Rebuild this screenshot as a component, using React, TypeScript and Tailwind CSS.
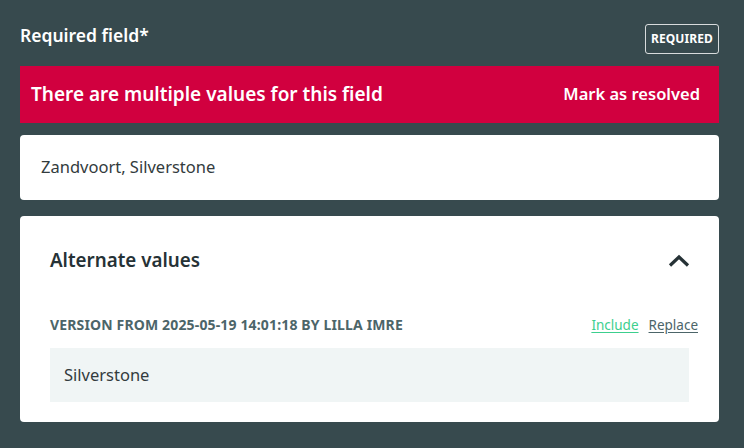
import React from "react";

const font = { fontFamily: '"Noto Sans", "Open Sans", sans-serif' };

export default function App() {
  return (
    <div className="w-[744px] h-[448px] bg-[#374a4e] pl-5 pr-[25px] pt-5" style={font}>
      {/* Header row */}
      <div className="flex items-start justify-between h-[46px]">
        <h2 className="mt-[1px] text-[17.5px] font-semibold text-white leading-[28px]">Required field*</h2>
        <span className="mt-1 rounded-[3px] border border-white/80 px-[5px] py-[5px] text-[12px] font-bold leading-[18px] tracking-[0.1px] text-white">
          REQUIRED
        </span>
      </div>

      {/* Conflict banner */}
      <div className="flex h-[57px] items-center justify-between bg-[#d1003f] pl-[11px] pr-[19px] text-white">
        <span className="text-[19px] font-semibold">There are multiple values for this field</span>
        <button className="text-[16.5px] font-semibold">Mark as resolved</button>
      </div>

      {/* Current value */}
      <div className="mt-3 flex h-[65px] items-center rounded-[4px] bg-white px-[21px] text-[16.5px] text-[#333b3d]">
        Zandvoort, Silverstone
      </div>

      {/* Alternate values */}
      <div className="mt-4 rounded-[4px] bg-white px-[30px] pb-5">
        <div className="flex h-[88px] items-center justify-between">
          <h3 className="text-[18.8px] font-semibold text-[#263236]">Alternate values</h3>
          <svg width="22" height="14" viewBox="0 0 22 14" className="mr-[-1px] mt-[2px]" fill="none">
            <path d="M2 11.5 L11 3 L20 11.5" stroke="#263236" strokeWidth="3.2" />
          </svg>
        </div>
        <div className="flex items-end justify-between pt-[10px] pb-[13px]">
          <span className="text-[14px] font-bold uppercase tracking-[0.15px] text-[#4c6569]">
            Version from 2025-05-19 14:01:18 by Lilla Imre
          </span>
          <div className="flex gap-[10px] text-[13.5px] -mr-[9px]">
            <a className="text-[#3ccf8e] underline underline-offset-2">Include</a>
            <a className="text-[#4c6569] underline underline-offset-2">Replace</a>
          </div>
        </div>
        <div className="flex h-[54px] items-center bg-[#f0f5f5] px-[14px] text-[16.5px] text-[#333b3d]">
          Silverstone
        </div>
      </div>
    </div>
  );
}
